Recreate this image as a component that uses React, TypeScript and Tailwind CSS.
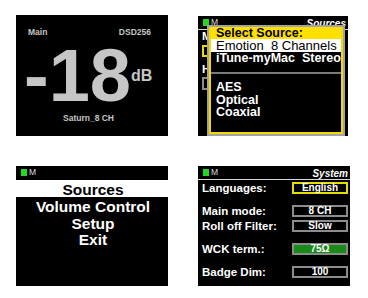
import type { ReactNode } from 'react'

type Tone = 'plain' | 'selected' | 'on'

const SETTINGS: { label: string; value: string; tone: Tone; gap: string }[] = [
  { label: 'Languages:', value: 'English', tone: 'selected', gap: 'mt-[2px]' },
  { label: 'Main mode:', value: '8 CH', tone: 'plain', gap: 'mt-[11px]' },
  { label: 'Roll off Filter:', value: 'Slow', tone: 'plain', gap: 'mt-[3px]' },
  { label: 'WCK term.:', value: '75Ω', tone: 'on', gap: 'mt-[11px]' },
  { label: 'Badge Dim:', value: '100', tone: 'plain', gap: 'mt-[11px]' },
]

const SOURCES_DIGITAL = ['AES', 'Optical', 'Coaxial']

const MENU = ['Volume Control', 'Setup', 'Exit']

/** Status bar used on the menu screens: green lock led, "M" and a page title. */
function StatusBar({ title }: { title?: string }) {
  return (
    <div className="flex h-[13px] items-center pl-[5px] pr-[2px]">
      <span className="h-[7px] w-[6px] bg-[#22d822]" />
      <span className="ml-[2px] text-[8.5px] leading-none text-[#dedede]">M</span>
      {title && (
        <span className="ml-auto self-end text-[10px] font-bold italic leading-[11px] text-white">{title}</span>
      )}
    </div>
  )
}

function Screen({ className, children }: { className: string; children: ReactNode }) {
  return <div className={`relative overflow-hidden bg-black ${className}`}>{children}</div>
}

function VolumeScreen() {
  return (
    <Screen className="flex h-[121px] w-[152px] flex-col text-[#c6c6c6]">
      <div className="flex justify-between pl-[12px] pr-[17px] pt-[12px] text-[8.5px] font-bold leading-[10px]">
        <span>Main</span>
        <span>DSD256</span>
      </div>
      <div className="mt-[11px] flex items-start pl-[8px]">
        <span className="text-[74px] font-bold leading-[56px]">-18</span>
        <span className="mt-[20px] text-[16px] font-bold leading-none">dB</span>
      </div>
      <div className="mt-[9px] pr-[7px] text-center text-[8.5px] font-bold leading-[10px]">Saturn_8 CH</div>
    </Screen>
  )
}

function SourceScreen() {
  return (
    <Screen className="mt-px h-[120px] w-[150px]">
      <StatusBar title="Sources" />
      <div className="h-px bg-[#d8d8d8]" />
      {/* the page behind the popup, only its left edge shows */}
      <div className="pl-[4px] text-[11.5px] font-bold leading-[12px] text-white">
        <div>M</div>
        <div className="mt-[3px] h-[12px] w-[60px] border-2 border-[#e6dc00]" />
        <div className="mt-[6px]">H</div>
        <div className="mt-[2px] h-[13px] w-[60px] border-2 border-[#8c8c8c]" />
      </div>

      <div className="absolute bottom-0 left-[9px] top-[9px] w-[138px] border-2 border-[#a3a3a3]">
        <div className="flex h-full flex-col overflow-hidden border-2 border-t-0 border-[#f2da00] bg-black whitespace-pre">
          <div className="h-[12px] bg-[#ffe000] pl-[5px] text-[12.5px] font-bold leading-[12px] text-black">
            Select Source:
          </div>
          <div className="h-[13px] bg-white pl-[5px] text-[13px] leading-[13px] text-black">Emotion  8 Channels</div>
          <div className="h-[13px] pl-[5px] text-[12.5px] font-bold leading-[13px] text-white">iTune-myMac  Stereo</div>
          <div className="mt-[7px] h-[2px] bg-[#7c7c7c]" />
          <div className="mt-[7px] pl-[5px] text-[12.5px] font-bold leading-[12.5px] text-white">
            {SOURCES_DIGITAL.map((s) => (
              <div key={s}>{s}</div>
            ))}
          </div>
        </div>
      </div>
    </Screen>
  )
}

function MenuScreen() {
  return (
    <Screen className="h-[120px] w-[152px]">
      <StatusBar />
      <div className="mt-px h-[17px] bg-white pl-[2px] pt-[2px] text-center text-[15.5px] font-bold leading-[15px] text-black">
        Sources
      </div>
      <div className="mt-[2px] pl-[2px] text-center text-[15.5px] font-bold leading-[16.5px] text-white">
        {MENU.map((m) => (
          <div key={m}>{m}</div>
        ))}
      </div>
    </Screen>
  )
}

function SystemScreen() {
  return (
    <Screen className="h-[120px] w-[152px]">
      <StatusBar title="System" />
      <div className="h-px bg-[#d8d8d8]" />
      {SETTINGS.map((s) => {
        const box =
          s.tone === 'selected'
            ? 'border-[#e6dc00]'
            : s.tone === 'on'
              ? 'border-[#8c8c8c] bg-[#178a17]'
              : 'border-[#8c8c8c]'
        return (
          <div key={s.label} className={`flex h-[12px] items-center pl-[4px] pr-[2px] ${s.gap}`}>
            <span className="text-[11.5px] font-bold leading-[12px] text-white">{s.label}</span>
            <span
              className={`ml-auto flex h-[12px] w-[56px] items-center justify-center border-2 text-[10px] font-bold leading-none text-white ${box}`}
            >
              {s.value}
            </span>
          </div>
        )
      })}
    </Screen>
  )
}

export default function App() {
  return (
    <div className="h-[298px] w-[368px] bg-white font-['Liberation_Sans',Arial,sans-serif]">
      <div className="grid grid-cols-[152px_152px] gap-x-[30px] gap-y-[30px] pl-[16px] pt-[15px]">
        <VolumeScreen />
        <SourceScreen />
        <MenuScreen />
        <SystemScreen />
      </div>
    </div>
  )
}
